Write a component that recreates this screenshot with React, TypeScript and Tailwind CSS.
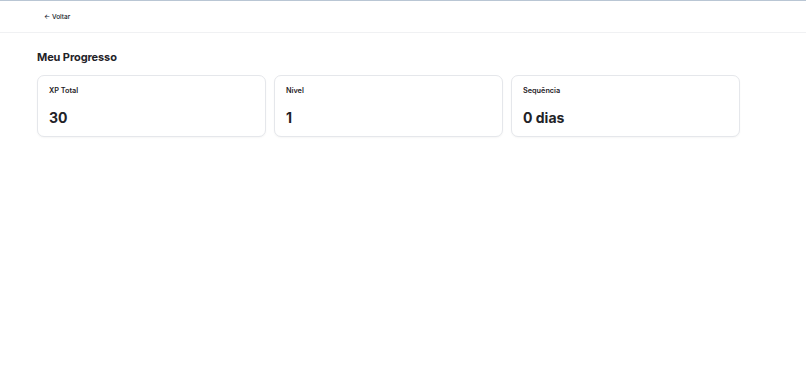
import React from "react";

export default function App() {
  const stats = [
    { label: "XP Total", value: "30" },
    { label: "Nível", value: "1" },
    { label: "Sequência", value: "0 dias" },
  ];
  return (
    <div className="min-h-[372px] w-[806px] bg-white text-[#111827]" style={{ fontFamily: "Inter, 'Noto Sans', sans-serif" }}>
      <div className="h-px bg-[#b9c6d4]" />
      <header className="flex h-[32px] items-center border-b border-[#f0f1f3] pl-[44px] pt-[2px]">
        <span className="text-[6.5px] font-medium leading-none text-[#111827]">← Voltar</span>
      </header>
      <main className="px-[37px] pt-[16px]">
        <h1 className="text-[11px] font-bold leading-[16px] tracking-[-0.1px] text-[#1f2328]">Meu Progresso</h1>
        <div className="mt-[10px] grid w-[703px] grid-cols-3 gap-[8px]">
          {stats.map((s) => (
            <div key={s.label} className="h-[62px] rounded-[7px] border border-[#e5e7eb] bg-white px-[11px] pt-[10px] shadow-[0_1px_2px_rgba(0,0,0,0.04)]">
              <div className="text-[7.3px] font-semibold leading-[10px] text-[#1f2328]">{s.label}</div>
              <div className="mt-[12px] text-[14px] font-bold leading-[20px] text-[#1f2328]">{s.value}</div>
            </div>
          ))}
        </div>
      </main>
    </div>
  );
}
